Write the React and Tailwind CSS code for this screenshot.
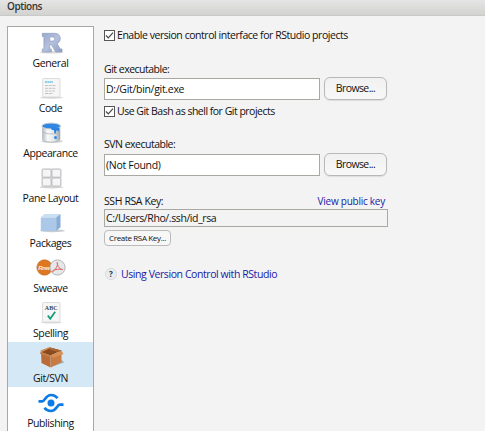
import React from "react";

function RIcon() {
  return (
    <svg width="28" height="24" viewBox="0 0 28 24">
      <defs>
        <linearGradient id="r" x1="0" y1="0" x2="1" y2="1">
          <stop offset="0" stopColor="#9aa9cb" />
          <stop offset="0.5" stopColor="#b3c0de" />
          <stop offset="1" stopColor="#8e9ec3" />
        </linearGradient>
      </defs>
      <ellipse cx="14.5" cy="21.3" rx="12" ry="1.2" fill="#d9d9d9" />
      <path fillRule="evenodd" d="M5.300 2.300h11.700c4.300 0 6.300 2 6.300 5.200 0 2.600-1.300 4.200-3.300 5l3.300 5.500h1.700v3h-6.300L14.200 13.500h-1.400V18h1.600v3H5.300v-3h1.600V5.500H5.300zM12.800 6v4h2.700c1.400 0 2.100-.7 2.100-2s-.7-2-2.100-2z" fill="url(#r)" stroke="#8a97b5" strokeWidth=".6" />
    </svg>
  );
}

function CodeIcon() {
  return (
    <svg width="28" height="24" viewBox="0 0 28 24">
      <ellipse cx="14.500" cy="21.500" rx="11.500" ry="1.200" fill="#d5d5d5" />
      <rect x="5.700" y="2.500" width="17.300" height="18.500" rx="1" fill="#f6f6f6" stroke="#d4d4d4" strokeWidth=".8" />
      <path d="M8 6h8" stroke="#67c5e8" strokeWidth="1.600" strokeDasharray="2 .4" />
      <path d="M8 9.500h11M8 12.300h11M8 15h10M8 17.500h8" stroke="#c2c2c2" strokeWidth="1" strokeDasharray="3 .7" />
    </svg>
  );
}

function PaintIcon() {
  return (
    <svg width="28" height="24" viewBox="0 0 28 24">
      <defs>
        <linearGradient id="can">
          <stop offset="0" stopColor="#b6bdc4" />
          <stop offset=".3" stopColor="#fafafa" />
          <stop offset=".7" stopColor="#e1e5e8" />
          <stop offset="1" stopColor="#9aa3ac" />
        </linearGradient>
      </defs>
      <ellipse cx="15" cy="20.300" rx="11" ry="1.600" fill="#cfcfcf" />
      <path d="M5.500 5v13c0 4 17.500 4 17.500 0V5z" fill="url(#can)" stroke="#a9b0b6" strokeWidth=".6" />
      <path d="M5.500 10.500c2 3.200 15.500 3.200 17.500 0" fill="none" stroke="#a6adb4" strokeWidth=".7" />
      <ellipse cx="14.200" cy="5" rx="9.300" ry="2.900" fill="#2f86e3" stroke="#c3ccd3" />
      <path d="M14 6.500h8v3c-.8 1.300-1.700.5-2.200-.5-.7.300-.5 3.800-1.800 3.500-1.200-.3-.5-3-1.500-3.500-1 .2-2.500 0-2.500-2.500z" fill="#2b82df" />
      <circle cx="18.500" cy="16.500" r="1.500" fill="#3288df" />
    </svg>
  );
}

function PaneIcon() {
  return (
    <svg width="28" height="24" viewBox="0 0 28 24">
      <ellipse cx="14.500" cy="21.200" rx="12" ry="1.300" fill="#d4d4d4" />
      <rect x="4.500" y="2.500" width="20" height="18" rx="1.500" fill="#d6d6d8" />
      <g fill="#f5f5f6" stroke="#b3b3b6" strokeWidth=".7">
        <rect x="5.300" y="3.200" width="8.700" height="7.900" rx="1" />
        <rect x="15" y="3.200" width="8.700" height="7.900" rx="1" />
        <rect x="5.300" y="12.100" width="8.700" height="7.900" rx="1" />
        <rect x="15" y="12.100" width="8.700" height="7.900" rx="1" />
      </g>
    </svg>
  );
}

function CubeIcon() {
  return (
    <svg width="28" height="24" viewBox="0 0 28 24">
      <ellipse cx="15.500" cy="19.800" rx="12.500" ry="1.500" fill="#c9ccd0" />
      <path d="M3.800 6.300h15.400V20H3.800z" fill="#abc8e8" />
      <path d="M3.800 6.300 7.500 3h16l-4.300 3.300z" fill="#cbdff3" />
      <path d="M19.200 6.300 23.500 3v13.300L19.200 20z" fill="#88aed7" />
    </svg>
  );
}

function SweaveIcon() {
  return (
    <svg width="30" height="24" viewBox="0 0 30 24">
      <circle cx="8.500" cy="11.500" r="7.700" fill="#df7721" stroke="#bd6926" strokeWidth=".6" />
      <text x="2.200" y="13.800" fontSize="6" fontWeight="700" fontStyle="italic" fontFamily="Liberation Sans, sans-serif" fill="#fff2df" textLength="12">Rnw</text>
      <circle cx="21.500" cy="11.500" r="7.600" fill="#e6e7e9" stroke="#a1a5aa" strokeWidth=".8" />
      <path d="M21 6.500c1.300 0 .8 5.500-4.700 9.500-.8-1 2-3.200 10.200-2.700 1 .9-4.500.3-5.500-6.800z" fill="none" stroke="#e16362" strokeWidth="1" />
    </svg>
  );
}

function SpellingIcon() {
  return (
    <svg width="28" height="24" viewBox="0 0 28 24">
      <ellipse cx="14.500" cy="21.500" rx="10.500" ry="1" fill="#ddd" />
      <rect x="5.500" y="1.500" width="17.500" height="19.500" rx="1" fill="#f6f6f6" stroke="#d4d4d4" strokeWidth=".8" />
      <text x="7.700" y="9" fontSize="6" fontWeight="700" fontFamily="Liberation Serif, serif" fill="#3f464b" textLength="13">ABC</text>
      <path d="m10.800 14.500 2.400 3.200 5-7" fill="none" stroke="#159b76" strokeWidth="1.800" />
    </svg>
  );
}

function BoxIcon() {
  return (
    <svg width="28" height="24" viewBox="0 0 28 24">
      <path d="m14 21 13.500-4.500-2.500-2.500-10 3z" fill="#a5b8c4" />
      <path d="m4 6 9.500 3.500v12L4.500 17z" fill="#b96c37" />
      <path d="m13.500 9.500 11-4v10.700l-11 5.300z" fill="#c87b42" />
      <path d="M4 6 13 1.500l11.500 3-11 5z" fill="#8a4a1f" />
      <path d="m13 1.500 11.500 3-1.300 1.800-10.200-2.300z" fill="#a96532" />
      <path d="m3 4.800 9.500-3.800.5 1.200-8.500 4z" fill="#d08a50" />
      <path d="m3.500 6 10 3.500-.8 1.800L3 7.800z" fill="#c67c45" />
      <path d="m13.500 9.300 11-4.500 2 3.200-10.300 3.700z" fill="#d98f53" />
    </svg>
  );
}

function PublishIcon() {
  return (
    <svg width="28" height="24" viewBox="0 0 28 24">
      <circle cx="14" cy="12" r="3.500" fill="#0d7be6" />
      <path d="M1.500 10.300h3.800c2.700 0 3.200-6.300 8.700-6.300 3.100 0 5.200 1.300 6.500 3.200" fill="none" stroke="#0d7be6" strokeWidth="2.700" />
      <path d="M26.500 13.700h-3.800c-2.700 0-3.200 6.300-8.700 6.300-3.100 0-5.200-1.300-6.500-3.200" fill="none" stroke="#0d7be6" strokeWidth="2.700" />
    </svg>
  );
}

const sections = [
  { label: "General", Icon: RIcon },
  { label: "Code", Icon: CodeIcon },
  { label: "Appearance", Icon: PaintIcon },
  { label: "Pane Layout", Icon: PaneIcon },
  { label: "Packages", Icon: CubeIcon },
  { label: "Sweave", Icon: SweaveIcon },
  { label: "Spelling", Icon: SpellingIcon },
  { label: "Git/SVN", Icon: BoxIcon },
  { label: "Publishing", Icon: PublishIcon },
];

function Check({ children, tracking }) {
  return (
    <label className="flex h-3 items-center gap-0.5">
      <span className="flex size-[11px] shrink-0 items-center justify-center border border-[#555] bg-white">
        <svg width="9" height="9" viewBox="0 0 9 9">
          <path d="m1 4.500 2.300 2.300L8 1.700" fill="none" stroke="#444" strokeWidth="1.200" />
        </svg>
      </span>
      <span className={tracking}>{children}</span>
    </label>
  );
}

function PathRow({ value, tracking }) {
  return (
    <div className="flex h-[23px] items-center gap-1">
      <div className={`flex h-[22px] w-[216px] items-center border border-[#aaa8a2] bg-white pl-px ${tracking}`}>
        {value}
      </div>
      <button className="h-[23px] w-[63px] rounded-[6px] border border-[#b8b8b6] bg-gradient-to-b from-[#f1f1f1] to-[#f8f8f8] pb-px tracking-[-0.6px] shadow-[0_1px_1px_#ddd]">
        Browse...
      </button>
    </div>
  );
}

export default function App() {
  return (
    <div className="h-[431px] w-[485px] overflow-hidden bg-[#f3f3f3] font-['Open_Sans','Noto_Sans',sans-serif] text-[10.5px] leading-3 whitespace-nowrap text-[#111]">
      <header className="flex h-4 items-center border-b border-[#c9c9c7] bg-gradient-to-b from-[#e5e5e5] to-[#d2d2d0] pb-[3px] pl-[7px] text-[10px] font-semibold tracking-[-0.45px] text-[#333]">
        Options
      </header>
      <div className="flex pl-[7px]">
        <nav className="mt-2.5 h-[406px] w-[87px] shrink-0 overflow-hidden border border-[#aaa8a3] bg-white">
          {sections.map(({ label, Icon }) => (
            <div key={label} className={`flex h-[45px] flex-col items-center pt-1 ${label === "Git/SVN" ? "bg-[#d4e9f5]" : ""}`}>
              <Icon />
              <span className="mt-0.5 tracking-[-0.4px]">{label}</span>
            </div>
          ))}
        </nav>
        <main className="ml-2.5 flex w-[284px] flex-col pt-[13px]">
          <Check tracking="tracking-[-0.45px]">Enable version control interface for RStudio projects</Check>
          <div className="mt-[22px] mb-0.5 tracking-[-0.5px]">Git executable:</div>
          <PathRow value="D:/Git/bin/git.exe" tracking="tracking-[-0.3px]" />
          <div className="mt-[5px]">
            <Check tracking="tracking-[-0.5px]">Use Git Bash as shell for Git projects</Check>
          </div>
          <div className="mt-[21px] mb-[3px] tracking-[-0.5px]">SVN executable:</div>
          <PathRow value="(Not Found)" tracking="tracking-[-0.3px]" />
          <div className="mt-[19px] mb-0.5 flex justify-between pr-[3px]">
            <span className="tracking-[-0.4px]">SSH RSA Key:</span>
            <a className="text-[10px] tracking-[-0.25px] text-[#1a1aa6]">View public key</a>
          </div>
          <div className="flex h-[18px] items-center border border-[#aaa8a3] pl-px tracking-[-0.4px]">C:/Users/Rho/.ssh/id_rsa</div>
          <button className="mt-[3px] h-4 w-[67px] rounded-[4px] border border-[#bbb] bg-[#f7f7f7] text-[8px] leading-3 tracking-[-0.35px]">Create RSA Key...</button>
          <div className="mt-[21px] flex h-[13px] items-center gap-1 pl-px">
            <span className="flex size-3 items-center justify-center rounded-full border border-[#d5dcdf] bg-[#eaedef] text-[8px] font-bold text-[#273c45]">?</span>
            <a className="tracking-[-0.42px] text-[#1a1aa6]">Using Version Control with RStudio</a>
          </div>
        </main>
      </div>
    </div>
  );
}
